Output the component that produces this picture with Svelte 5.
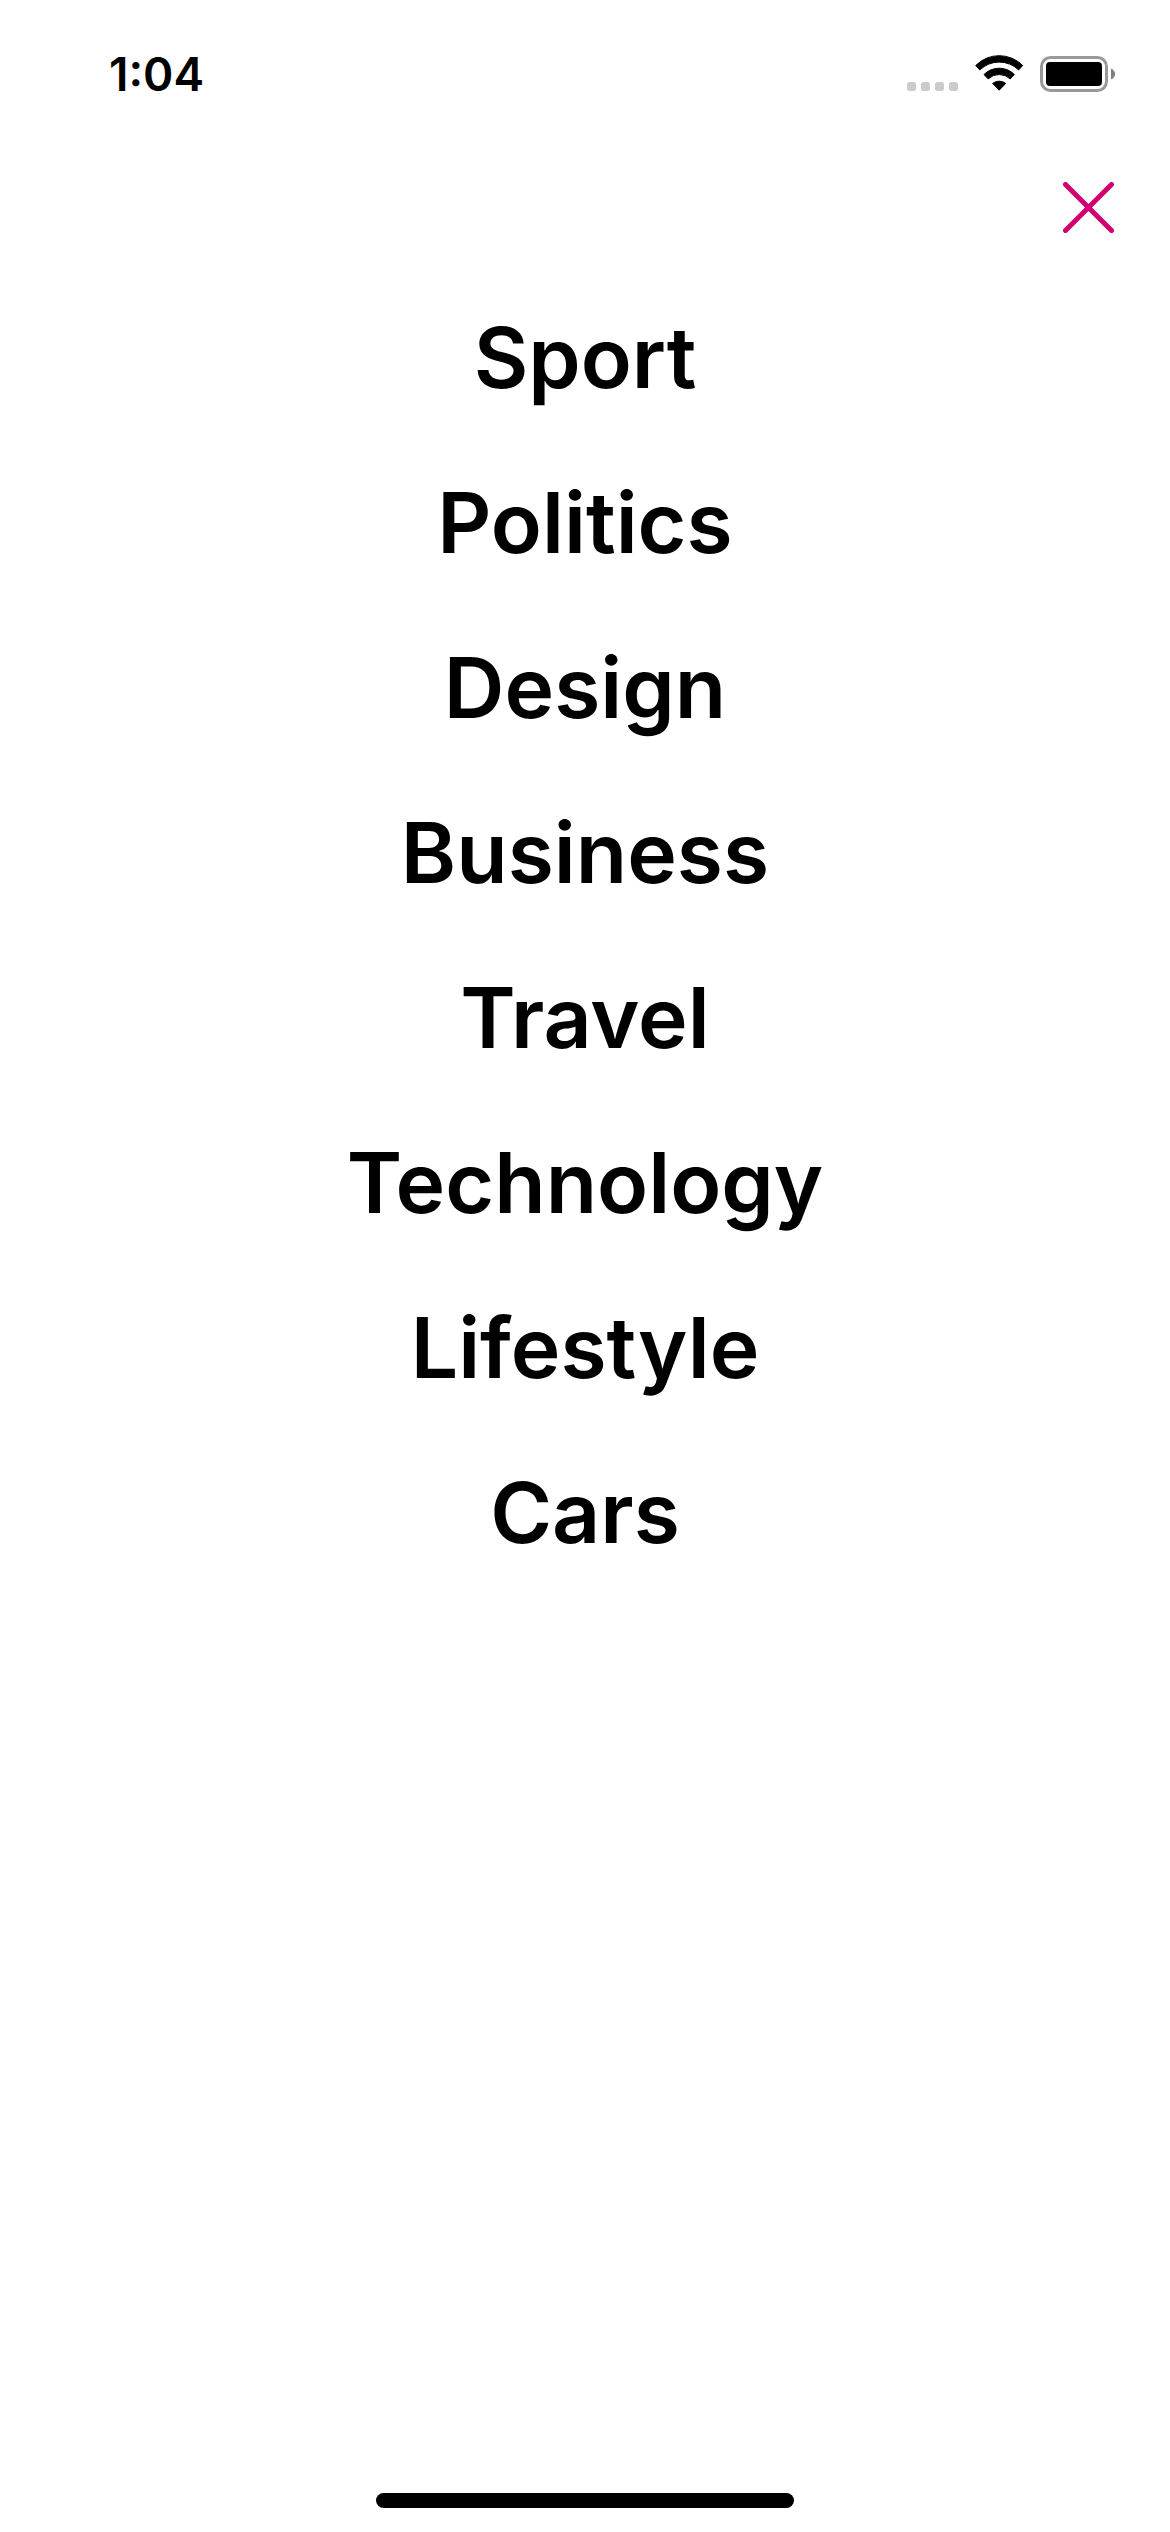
<script>
  const sections = ['Sport', 'Politics', 'Design', 'Business', 'Travel', 'Technology', 'Lifestyle', 'Cars'];
</script>

<div class="screen">
  <header class="status">
    <time>1:04</time>
    <div class="indicators">
      <svg width="53" height="36" viewBox="0 0 53 36" aria-hidden="true">
        <g fill="#cbcbcb">
          <rect x="0" y="26" width="9" height="9" rx="2.500" />
          <rect x="14" y="26" width="9" height="9" rx="2.500" />
          <rect x="28" y="26" width="9" height="9" rx="2.500" />
          <rect x="42" y="26" width="9" height="9" rx="2.500" />
        </g>
      </svg>
      <svg width="50" height="38" viewBox="0 0 50 38" aria-hidden="true">
        <g stroke="#000" stroke-width="1" stroke-linejoin="round">
          <path d="M.7 10.500A33 33 0 0 1 47.700 10.500L43.600 14.900A28 28 0 0 0 4.800 14.900Z" />
          <path d="M9 19.500A21.500 21.500 0 0 1 39.400 19.500L35.200 23.900A16 16 0 0 0 13.200 23.900Z" />
          <path d="M17.700 28.400A10.500 10.500 0 0 1 30.700 28.400L24.200 35.200Z" />
        </g>
      </svg>
      <svg width="76" height="36" viewBox="0 0 76 36" aria-hidden="true">
        <rect x="1.500" y="1.500" width="65" height="33" rx="9" fill="none" stroke="#999" stroke-width="3" />
        <rect x="6" y="6" width="56" height="24" rx="4" />
        <path d="M71 12.500Q75 14.500 75 18T71 23.500Z" fill="#808080" />
      </svg>
    </div>
  </header>
  <div class="toolbar">
    <button aria-label="Close menu">
      <svg width="51" height="51" viewBox="0 0 51 51" aria-hidden="true">
        <path d="M2.500 2.500L48.500 48.500M48.500 2.500L2.500 48.500" fill="none" stroke="#d0006f" stroke-width="5" stroke-linecap="round" />
      </svg>
    </button>
  </div>
  <nav aria-label="Sections">
    {#each sections as section}
      <a href={'#' + section.toLowerCase()}>{section}</a>
    {/each}
  </nav>
  <div class="home"></div>
</div>

<style>
  :global(body) { background: #fff; }
  .screen { min-height: 100vh; display: flex; flex-direction: column; color: #000; font-family: Inter, sans-serif; font-weight: 600; }
  .status { display: flex; justify-content: space-between; align-items: center; height: 148px; padding: 0 54px 0 109px; }
  time { font-size: 46px; }
  .indicators { display: flex; align-items: center; gap: 15px; }
  .toolbar { display: flex; justify-content: flex-end; padding: 34px 56px 0 0; }
  button { display: flex; padding: 0; border: 0; background: none; cursor: pointer; }
  nav { display: flex; flex-direction: column; align-items: center; gap: 60px; padding-top: 72px; }
  a { color: inherit; text-decoration: none; font-size: 84px; line-height: 105px; }
  .home { width: 418px; height: 15px; margin: auto auto 24px; border-radius: 8px; background: #000; }
</style>
